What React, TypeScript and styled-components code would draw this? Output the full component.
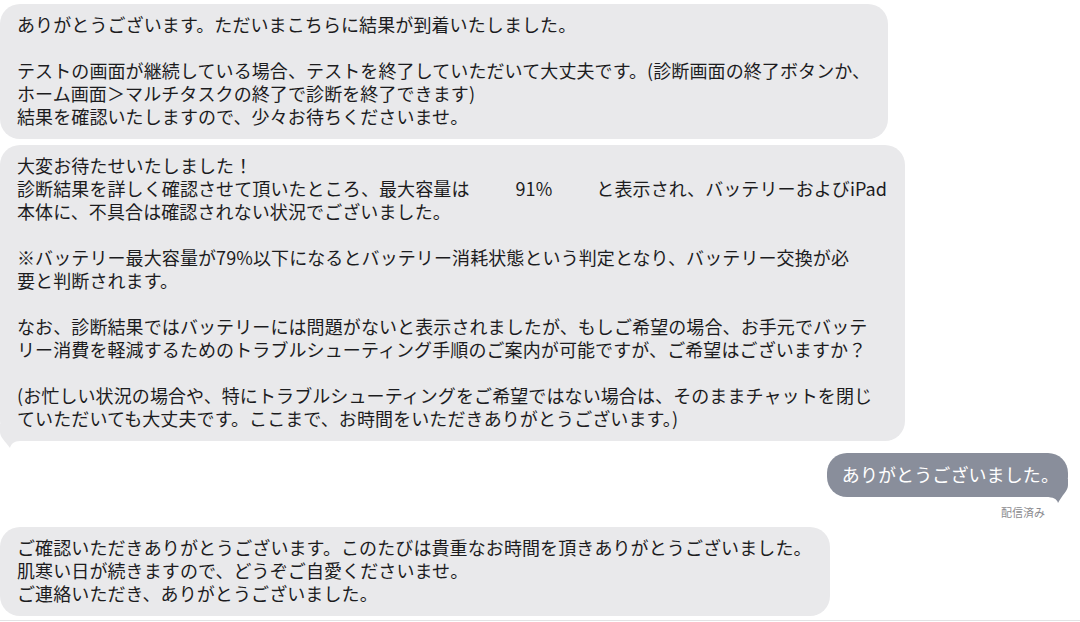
import React from "react";
import styled, { createGlobalStyle } from "styled-components";

const Global = createGlobalStyle`
  html, body { margin: 0; padding: 0; background: #ffffff; }
  body { font-family: "Noto Sans CJK JP", "Noto Sans", sans-serif; }
`;

const Page = styled.div`
  width: 1080px;
  height: 622px;
  overflow: hidden;
  display: flex;
  flex-direction: column;
  background: #ffffff;
  padding-top: 4px;
  box-sizing: border-box;
`;

const Bubble = styled.div<{ $gap: number; $sent?: boolean }>`
  position: relative;
  isolation: isolate;
  align-self: ${(p) => (p.$sent ? "flex-end" : "flex-start")};
  width: fit-content;
  margin-top: ${(p) => p.$gap}px;
  margin-right: ${(p) => (p.$sent ? 12 : 0)}px;
  padding: ${(p) => (p.$sent ? "10px 9px 11px 15px" : "9px 18px 11px 17px")};
  background: ${(p) => (p.$sent ? "#898e9b" : "#e9e9eb")};
  color: ${(p) => (p.$sent ? "#ffffff" : "#1c1c1e")};
  border-radius: 20px;
  font-size: 18px;
  line-height: 23px;
  letter-spacing: 0.1px;
  white-space: pre;
`;

const Figure = styled.span`
  margin: 0 44px 0 46px;
`;

const Tail = styled.svg<{ $sent?: boolean }>`
  position: absolute;
  z-index: -1;
  bottom: ${(p) => (p.$sent ? -6 : -7)}px;
  ${(p) => (p.$sent ? "right: 0;" : "left: 0;")}
  width: 24px;
  height: 24px;
  display: block;
`;

const Status = styled.div`
  align-self: flex-end;
  margin-top: 8px;
  margin-right: 35px;
  font-size: 11px;
  line-height: 14px;
  color: #8a8a8e;
`;

const Rule = styled.div`
  margin-top: auto;
  margin-bottom: 1px;
  height: 1px;
  background: #e2e2e4;
`;

const LeftTail = () => (
  <Tail viewBox="0 0 24 24">
    <path d="M0 0 V8 C0 13 5 17 10 24 C11 20 14 17 20 17 H24 V0 Z" fill="#e9e9eb" />
  </Tail>
);

const RightTail = () => (
  <Tail $sent viewBox="0 0 24 24">
    <path d="M24 0 V6 C24 12 18 16 14 24 C13 20 9 18 2 18 H0 V0 Z" fill="#898e9b" />
  </Tail>
);

export default function App() {
  return (
    <>
      <Global />
      <Page>
        <Bubble $gap={0}>
          {"ありがとうございます。ただいまこちらに結果が到着いたしました。\n\nテストの画面が継続している場合、テストを終了していただいて大丈夫です。(診断画面の終了ボタンか、\nホーム画面＞マルチタスクの終了で診断を終了できます)\n結果を確認いたしますので、少々お待ちくださいませ。"}
        </Bubble>
        <Bubble $gap={6}>
          {"大変お待たせいたしました！\n診断結果を詳しく確認させて頂いたところ、最大容量は"}
          <Figure>91%</Figure>
          {"と表示され、バッテリーおよびiPad\n本体に、不具合は確認されない状況でございました。\n\n※バッテリー最大容量が79%以下になるとバッテリー消耗状態という判定となり、バッテリー交換が必\n要と判断されます。\n\nなお、診断結果ではバッテリーには問題がないと表示されましたが、もしご希望の場合、お手元でバッテ\nリー消費を軽減するためのトラブルシューティング手順のご案内が可能ですが、ご希望はございますか？\n\n(お忙しい状況の場合や、特にトラブルシューティングをご希望ではない場合は、そのままチャットを閉じ\nていただいても大丈夫です。ここまで、お時間をいただきありがとうございます。)"}
          <LeftTail />
        </Bubble>
        <Bubble $gap={12} $sent>
          ありがとうございました。
          <RightTail />
        </Bubble>
        <Status>配信済み</Status>
        <Bubble $gap={8}>
          {"ご確認いただきありがとうございます。このたびは貴重なお時間を頂きありがとうございました。\n肌寒い日が続きますので、どうぞご自愛くださいませ。\nご連絡いただき、ありがとうございました。"}
        </Bubble>
        <Rule />
      </Page>
    </>
  );
}
